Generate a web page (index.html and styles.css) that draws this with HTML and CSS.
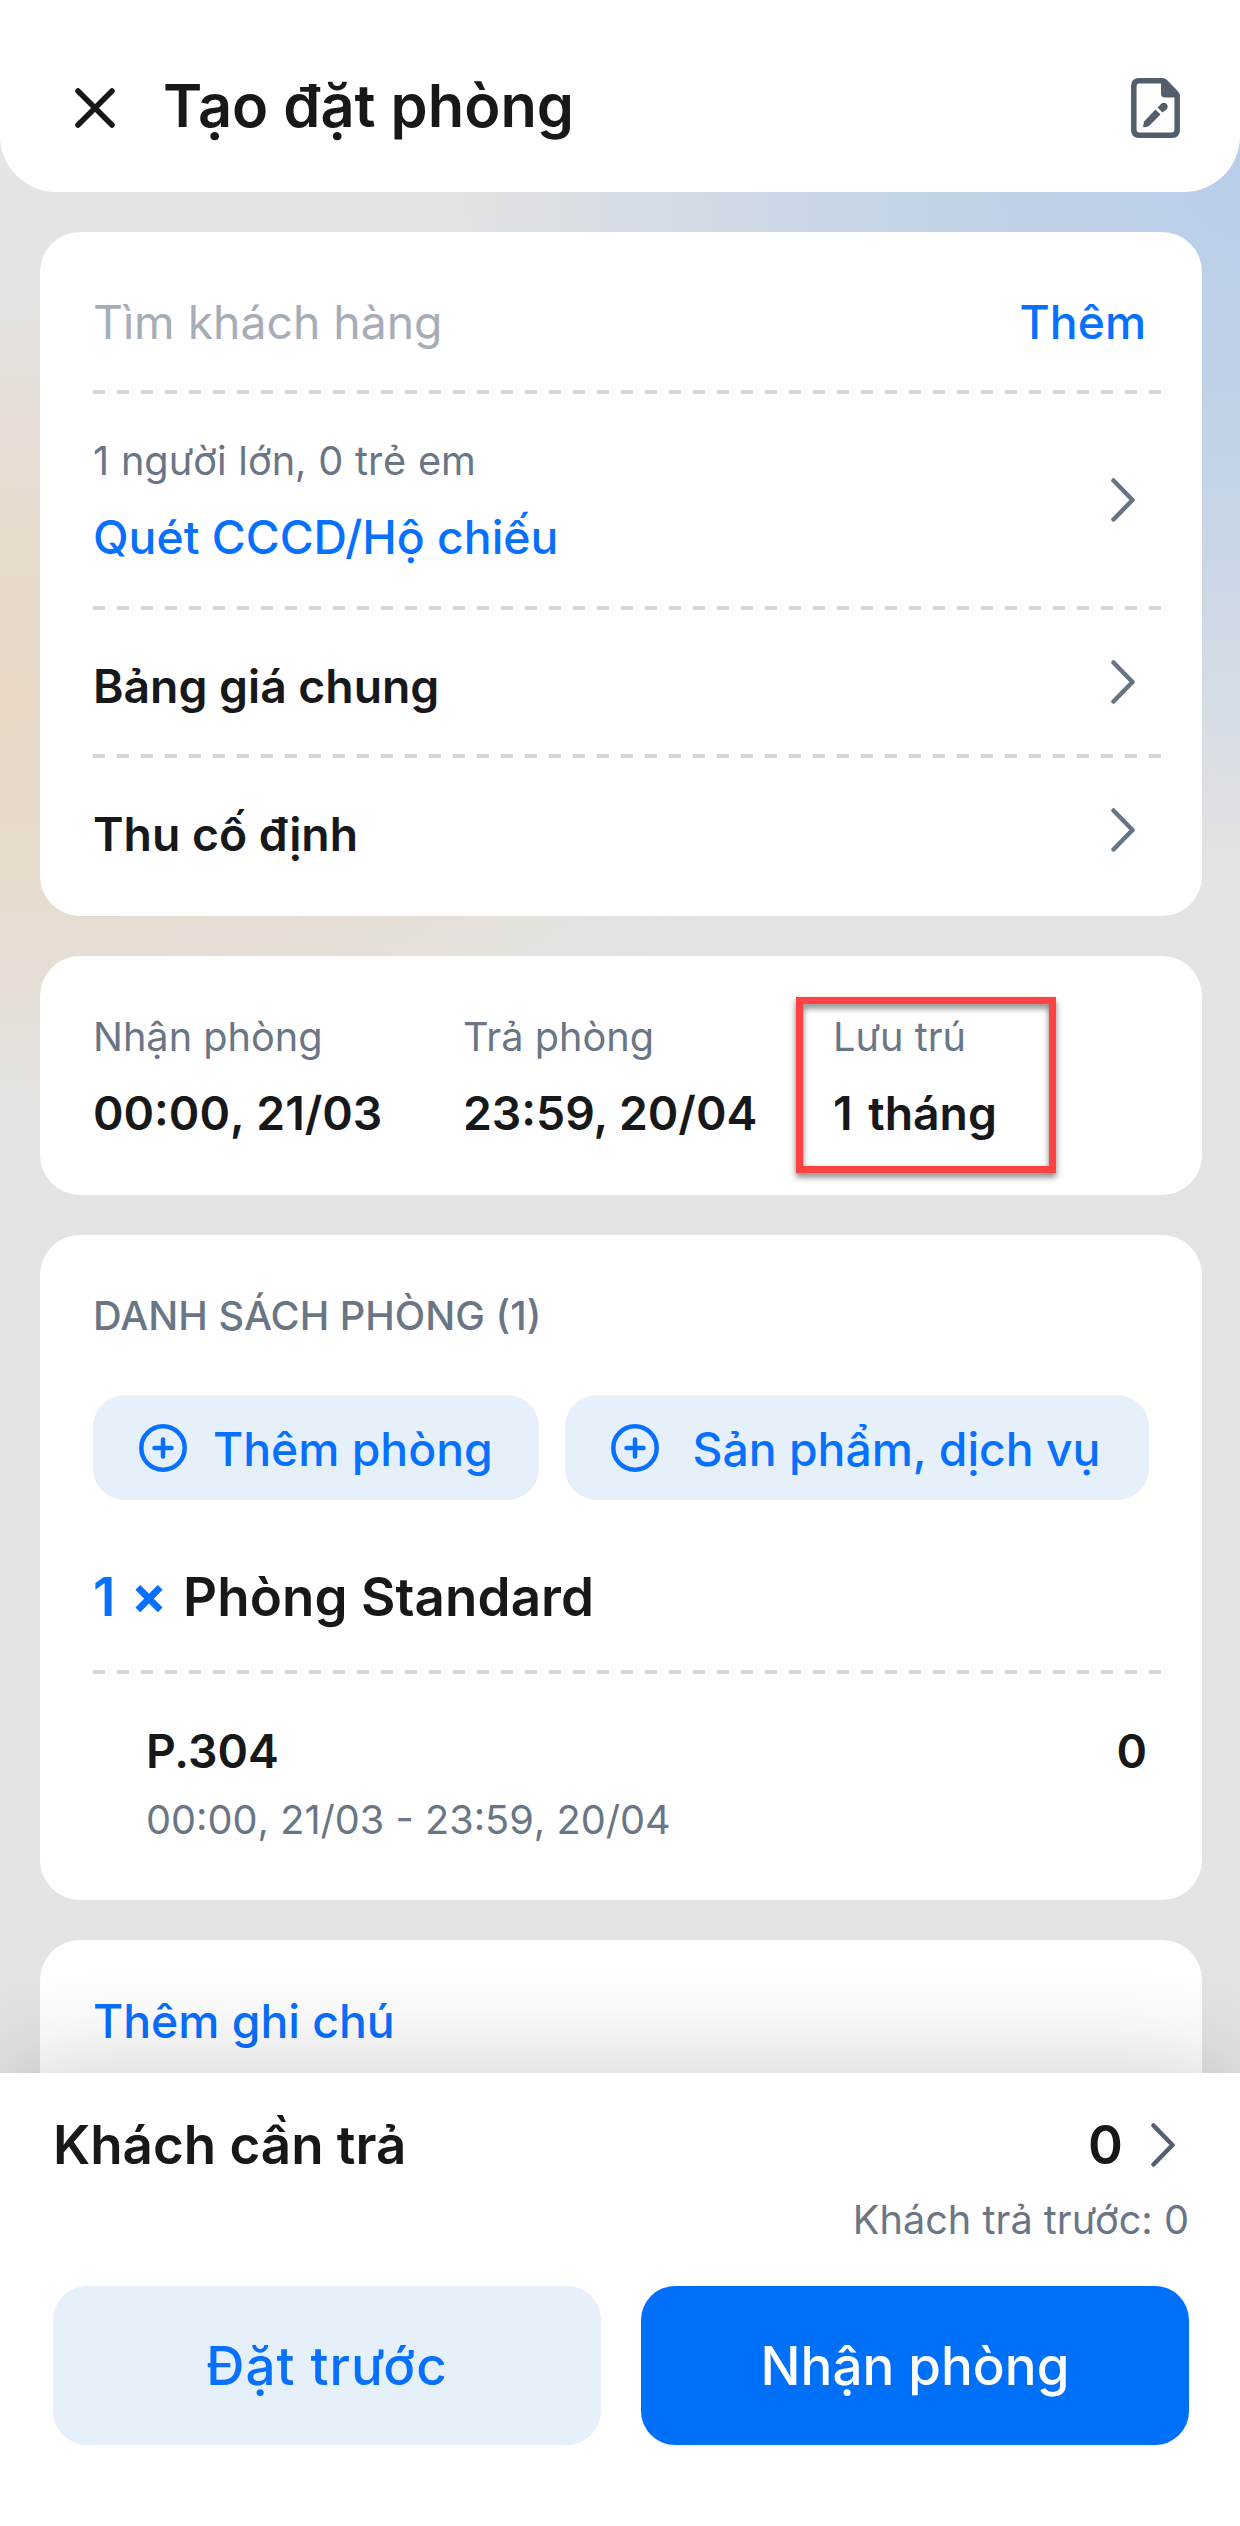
FILE: index.html
```html
<!DOCTYPE html>
<html lang="vi">
<head>
    <meta charset="UTF-8">
    <meta name="viewport" content="width=device-width, initial-scale=1.0">
    <title>Tạo đặt phòng</title>

    <link rel="stylesheet" href="styles.css">
</head>
<body>

    <header class="header">
        <svg class="icon-close" viewBox="0 0 42 42"><path d="M4 4L38 38M38 4L4 38"/></svg>
        <h1>Tạo đặt phòng</h1>
        <svg class="icon-draft" viewBox="0 0 50 60">
            <path class="sheet" d="M8 2.800H31Q33 2.800 34.500 4.300L44.700 15Q46.200 16.500 46.200 18.500V52Q46.200 57.200 41 57.200H8Q2.800 57.200 2.800 52V8Q2.800 2.800 8 2.800Z"/>
            <path d="M30 3H34L46 15.500V19.500H34Q30 19.500 30 15.500Z"/>
            <path d="M12 49L13 43.500L24.500 31.500L29.500 36.500L18 48Q16 49.500 12 49Z"/>
            <path d="M26.500 29.500L30 26Q33 23.500 35.500 26Q38 28.500 35.500 31.500L31.500 34.500Z"/>
        </svg>
    </header>

    <main class="content">
        <section class="card card-guest">
            <div class="row row-search">
                <span class="placeholder">Tìm khách hàng</span>
                <a class="link add">Thêm</a>
            </div>
            <div class="dash"></div>
            <div class="row row-people">
                <div>
                    <p class="label people">1 người lớn, 0 trẻ em</p>
                    <p class="link scan">Quét CCCD/Hộ chiếu</p>
                </div>
                <svg class="chevron" viewBox="0 0 24 44"><path d="M2.500 2.500L21.500 22L2.500 41.500"/></svg>
            </div>
            <div class="dash"></div>
            <div class="row row-option">
                <span class="value">Bảng giá chung</span>
                <svg class="chevron" viewBox="0 0 24 44"><path d="M2.500 2.500L21.500 22L2.500 41.500"/></svg>
            </div>
            <div class="dash"></div>
            <div class="row row-option">
                <span class="value">Thu cố định</span>
                <svg class="chevron" viewBox="0 0 24 44"><path d="M2.500 2.500L21.500 22L2.500 41.500"/></svg>
            </div>
        </section>

        <section class="card card-stay">
            <div class="stay">
                <p class="label">Nhận phòng</p>
                <p class="value check-in">00:00, 21/03</p>
            </div>
            <div class="stay">
                <p class="label">Trả phòng</p>
                <p class="value">23:59, 20/04</p>
            </div>
            <div class="stay highlighted">
                <p class="label">Lưu trú</p>
                <p class="value duration">1 tháng</p>
                <span class="highlight"></span>
            </div>
        </section>

        <section class="card card-rooms">
            <h2 class="rooms-title">DANH SÁCH PHÒNG (1)</h2>
            <div class="chips">
                <button class="chip chip-room">
                    <svg class="icon-plus" viewBox="0 0 48 48"><circle cx="24" cy="24" r="21.700"/><path d="M24 15.500V32.500M15.500 24H32.500"/></svg>
                    <span>Thêm phòng</span>
                </button>
                <button class="chip chip-service">
                    <svg class="icon-plus" viewBox="0 0 48 48"><circle cx="24" cy="24" r="21.700"/><path d="M24 15.500V32.500M15.500 24H32.500"/></svg>
                    <span>Sản phẩm, dịch vụ</span>
                </button>
            </div>
            <h3 class="room-type"><span class="count">1</span><span class="times">×</span>Phòng Standard</h3>
            <div class="dash"></div>
            <div class="room">
                <div class="room-head">
                    <span class="value">P.304</span>
                    <span class="value">0</span>
                </div>
                <p class="label room-time">00:00, 21/03 - 23:59, 20/04</p>
            </div>
        </section>

        <section class="card card-note">
            <a class="link note">Thêm ghi chú</a>
        </section>
    </main>

    <footer class="footer">
        <div class="total">
            <span class="total-label">Khách cần trả</span>
            <span class="total-value">0</span>
            <svg class="chevron" viewBox="0 0 24 44"><path d="M2.500 2.500L21.500 22L2.500 41.500"/></svg>
        </div>
        <p class="label prepaid">Khách trả trước: 0</p>
        <div class="actions">
            <button class="btn btn-light">Đặt trước</button>
            <button class="btn btn-primary">Nhận phòng</button>
        </div>
    </footer>

</body>
</html>
```
FILE: styles.css
```css
* {
    margin: 0;
    padding: 0;
    box-sizing: border-box;
}

body {
    font-family: Inter, "Liberation Sans", sans-serif;
    font-size: 46px;
    color: #17181a;
    height: 2526px;
    overflow: hidden;
    display: flex;
    flex-direction: column;
    background-color: #e4e4e4;
    background-image:
        radial-gradient(ellipse 840px 720px at 1260px 170px, #b8ceea 0%, #c5d4e6 45%, rgba(228, 228, 228, 0) 100%),
        radial-gradient(ellipse 860px 450px at -20px 700px, #e8d9c5 0%, #e7dcd0 45%, rgba(228, 228, 228, 0) 100%);
}

button {
    border: none;
    font-family: inherit;
}

svg {
    display: block;
    flex: none;
}

/* header */
.header {
    display: flex;
    align-items: center;
    flex: none;
    height: 192px;
    padding: 24px 59px 0 74px;
    background-color: #fff;
    border-radius: 0 0 56px 56px;
}

.header h1 {
    flex: 1;
    margin-left: 47px;
    padding-bottom: 6px;
    font-size: 59.5px;
    font-weight: 600;
    line-height: 72px;
}

.icon-close {
    width: 42px;
    height: 42px;
    stroke: #17181a;
    stroke-width: 5.5;
    stroke-linecap: round;
}

.icon-draft {
    width: 50px;
    height: 60px;
    fill: #525e6c;
}

.icon-draft .sheet {
    fill: none;
    stroke: #525e6c;
    stroke-width: 5.5;
}

/* cards */
.content {
    flex: 1;
    min-height: 0;
    display: flex;
    flex-direction: column;
    gap: 40px;
    padding: 40px 38px 0 40px;
}

.card {
    flex: none;
    padding: 0 53px;
    background-color: #fff;
    border-radius: 40px;
}

.row {
    display: flex;
    justify-content: space-between;
    align-items: center;
}

.dash {
    height: 4px;
    margin-right: -12px;
    background: repeating-linear-gradient(to right, #d5d5d5 0 12px, transparent 12px 24px);
}

.chevron {
    width: 24px;
    height: 44px;
    margin-right: 14px;
    fill: none;
    stroke: #667485;
    stroke-width: 4.5;
    stroke-linecap: round;
    stroke-linejoin: round;
}

.label {
    font-size: 39.7px;
    line-height: 48px;
    color: #6a7686;
}

.value {
    font-size: 46.3px;
    font-weight: 600;
    line-height: 60px;
}

.link {
    font-size: 46.3px;
    font-weight: 500;
    line-height: 60px;
    color: #0870ff;
}

/* guest card */
.card-guest {
    padding-bottom: 14px;
}

.row-search {
    height: 158px;
    padding-top: 22px;
}

.placeholder {
    font-size: 46.3px;
    line-height: 60px;
    color: #a6adb8;
}

.add {
    margin-right: 3px;
}

.row-people {
    height: 212px;
}

.people {
    margin-top: 4px;
    margin-bottom: 22px;
    font-kerning: none;
    word-spacing: 0.6px;
}

.row-option {
    height: 144px;
}

.row-option .value {
    padding-top: 8px;
}

/* stay card */
.card-stay {
    display: grid;
    grid-template-columns: 370px 370px 1fr;
    height: 239px;
    padding-top: 57px;
}

.stay .value {
    margin-top: 22px;
}

.check-in {
    font-kerning: none;
}

.duration {
    word-spacing: 4px;
}

.highlighted {
    position: relative;
}

.highlight {
    position: absolute;
    left: -37px;
    top: -16px;
    width: 260px;
    height: 176px;
    border: 7px solid #ff4343;
    filter: drop-shadow(0 4px 3px rgba(0, 0, 0, 0.5));
}

/* rooms card */
.card-rooms {
    padding-top: 57px;
    padding-bottom: 56px;
}

.rooms-title {
    font-size: 39.7px;
    font-weight: 500;
    line-height: 48px;
    color: #6a7686;
}

.chips {
    display: flex;
    gap: 26px;
    margin-top: 55px;
}

.chip {
    display: flex;
    align-items: center;
    height: 105px;
    padding-left: 46px;
    border-radius: 32px;
    background-color: #e6f0fb;
    color: #0870ff;
    font-size: 46.3px;
    font-weight: 500;
}

.chip span {
    padding-top: 2px;
}

.chip-room {
    width: 446px;
    gap: 26px;
}

.chip-service {
    width: 585px;
    gap: 34px;
}

.icon-plus {
    width: 48px;
    height: 48px;
    fill: none;
    stroke: #0870ff;
    stroke-width: 4.5;
    stroke-linecap: round;
}

.room-type {
    display: flex;
    margin-top: 65px;
    margin-bottom: 41px;
    font-size: 52.9px;
    font-weight: 600;
    letter-spacing: 0.1px;
    line-height: 64px;
}

.count {
    width: 38px;
    color: #0870ff;
}

.times {
    width: 52px;
    color: #0870ff;
    font-weight: 700;
    line-height: 60px;
}

.room {
    margin-top: 47px;
    padding-left: 53px;
}

.room-head {
    display: flex;
    justify-content: space-between;
    padding-right: 2px;
}

.room-time {
    margin-top: 15px;
    font-kerning: none;
}

/* note card, runs under the footer */
.card-note {
    height: 200px;
    padding-top: 51px;
}

.note {
    display: block;
}

/* footer */
.footer {
    position: relative;
    flex: none;
    height: 453px;
    padding: 40px 51px 0 53px;
    background-color: #fff;
    box-shadow: 0 0 110px rgba(0, 0, 0, 0.2);
}

.total {
    display: flex;
    align-items: center;
    font-size: 52.9px;
    font-weight: 600;
    line-height: 64px;
}

.total-label {
    flex: 1;
}

.total-value {
    margin-right: 28px;
}

.total .chevron {
    stroke: #555f6e;
}

.prepaid {
    margin-top: 19px;
    text-align: right;
}

.actions {
    display: flex;
    gap: 40px;
    margin-top: 42px;
}

.btn {
    flex: 1;
    height: 159px;
    border-radius: 34px;
    font-size: 52.9px;
    font-weight: 500;
}

.btn-light {
    background-color: #e6f0fb;
    color: #0870ff;
    letter-spacing: 1px;
}

.btn-primary {
    background-color: #0070f9;
    color: #fff;
}
```
